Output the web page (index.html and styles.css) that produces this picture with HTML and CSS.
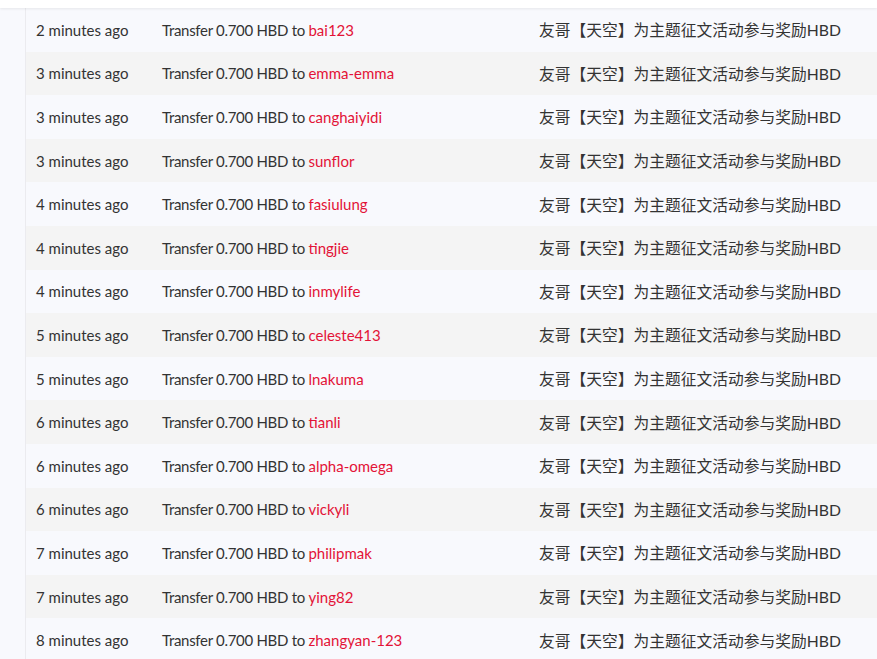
FILE: index.html
```html
<!DOCTYPE html>
<html lang="zh">
<head>
  <meta charset="UTF-8">
  <meta name="viewport" content="width=device-width, initial-scale=1.0">
  <title>Transfers</title>
  <link rel="stylesheet" href="styles.css">
</head>
<body>
  <div class="topbar"></div>
  <div class="page">
    <div class="side"></div>
    <div class="list">
      <div class="row"><span class="time">2 minutes ago</span><span class="op">Transfer 0.700 HBD to <a href="#">bai123</a></span><span class="memo">友哥【天空】为主题征文活动参与奖励HBD</span></div>
      <div class="row"><span class="time">3 minutes ago</span><span class="op">Transfer 0.700 HBD to <a href="#">emma-emma</a></span><span class="memo">友哥【天空】为主题征文活动参与奖励HBD</span></div>
      <div class="row"><span class="time">3 minutes ago</span><span class="op">Transfer 0.700 HBD to <a href="#">canghaiyidi</a></span><span class="memo">友哥【天空】为主题征文活动参与奖励HBD</span></div>
      <div class="row"><span class="time">3 minutes ago</span><span class="op">Transfer 0.700 HBD to <a href="#">sunflor</a></span><span class="memo">友哥【天空】为主题征文活动参与奖励HBD</span></div>
      <div class="row"><span class="time">4 minutes ago</span><span class="op">Transfer 0.700 HBD to <a href="#">fasiulung</a></span><span class="memo">友哥【天空】为主题征文活动参与奖励HBD</span></div>
      <div class="row"><span class="time">4 minutes ago</span><span class="op">Transfer 0.700 HBD to <a href="#">tingjie</a></span><span class="memo">友哥【天空】为主题征文活动参与奖励HBD</span></div>
      <div class="row"><span class="time">4 minutes ago</span><span class="op">Transfer 0.700 HBD to <a href="#">inmylife</a></span><span class="memo">友哥【天空】为主题征文活动参与奖励HBD</span></div>
      <div class="row"><span class="time">5 minutes ago</span><span class="op">Transfer 0.700 HBD to <a href="#">celeste413</a></span><span class="memo">友哥【天空】为主题征文活动参与奖励HBD</span></div>
      <div class="row"><span class="time">5 minutes ago</span><span class="op">Transfer 0.700 HBD to <a href="#">lnakuma</a></span><span class="memo">友哥【天空】为主题征文活动参与奖励HBD</span></div>
      <div class="row"><span class="time">6 minutes ago</span><span class="op">Transfer 0.700 HBD to <a href="#">tianli</a></span><span class="memo">友哥【天空】为主题征文活动参与奖励HBD</span></div>
      <div class="row"><span class="time">6 minutes ago</span><span class="op">Transfer 0.700 HBD to <a href="#">alpha-omega</a></span><span class="memo">友哥【天空】为主题征文活动参与奖励HBD</span></div>
      <div class="row"><span class="time">6 minutes ago</span><span class="op">Transfer 0.700 HBD to <a href="#">vickyli</a></span><span class="memo">友哥【天空】为主题征文活动参与奖励HBD</span></div>
      <div class="row"><span class="time">7 minutes ago</span><span class="op">Transfer 0.700 HBD to <a href="#">philipmak</a></span><span class="memo">友哥【天空】为主题征文活动参与奖励HBD</span></div>
      <div class="row"><span class="time">7 minutes ago</span><span class="op">Transfer 0.700 HBD to <a href="#">ying82</a></span><span class="memo">友哥【天空】为主题征文活动参与奖励HBD</span></div>
      <div class="row"><span class="time">8 minutes ago</span><span class="op">Transfer 0.700 HBD to <a href="#">zhangyan-123</a></span><span class="memo">友哥【天空】为主题征文活动参与奖励HBD</span></div>
    </div>
  </div>
</body>
</html>
```

FILE: styles.css
```css
* {
  margin: 0;
  padding: 0;
  box-sizing: border-box;
}

body {
  font-family: 'Lato', 'Noto Sans CJK SC', sans-serif;
  font-size: 15px;
  color: #333;
  background: #f8f9fd;
  overflow: hidden;
  height: 659px;
}

.topbar {
  height: 8px;
  background: #fff;
  box-shadow: 0 1px 3px rgba(0,0,0,0.08);
  position: relative;
  z-index: 2;
}

.page {
  display: flex;
}

.side {
  width: 26px;
  flex: none;
  border-right: 1px solid #ebebef;
}

.list {
  flex: 1;
}

.row {
  display: grid;
  grid-template-columns: 126px 377px 1fr;
  align-items: center;
  height: 43.6px;
  padding-left: 10px;
  white-space: nowrap;
  background: #f8f9fd;
}

.row:nth-child(even) {
  background: #f4f4f4;
}

.op {
  letter-spacing: -0.3px;
}

.op a {
  color: #e31337;
  text-decoration: none;
  letter-spacing: 0;
}

.memo {
  font-size: 15.75px;
}
```
